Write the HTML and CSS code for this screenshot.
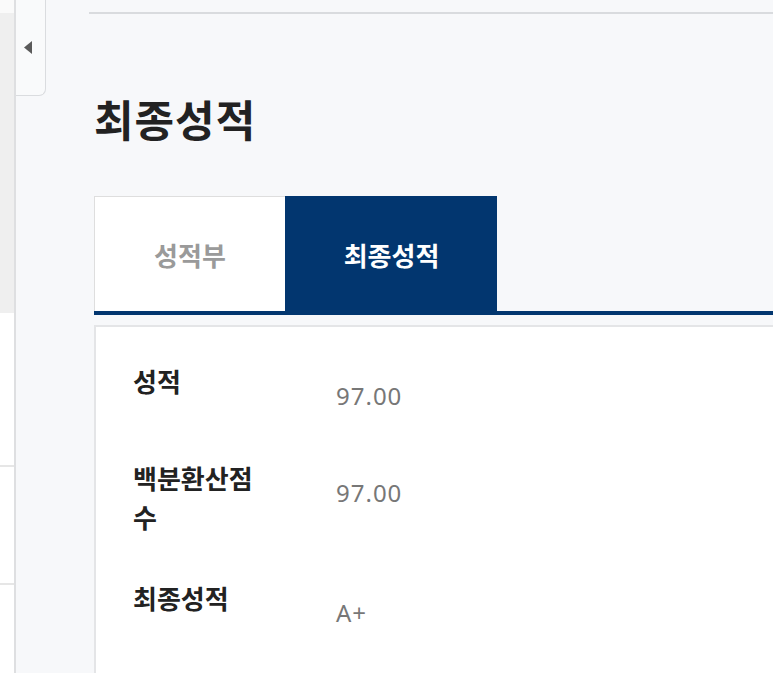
FILE: index.html
```html
<!DOCTYPE html>
<html lang="ko">
<head>
    <meta charset="UTF-8">
    <meta name="viewport" content="width=device-width, initial-scale=1.0">
    <title>최종성적</title>
    <link rel="stylesheet" href="styles.css">
</head>
<body>
    <aside class="sidebar">
        <div class="sb-top"></div>
        <div class="sb-menu"></div>
        <div class="sb-item"></div>
        <div class="sb-item short"></div>
        <div class="sb-item"></div>
    </aside>

    <main class="main">
        <button class="drawer-toggle" aria-label="메뉴 닫기">
            <svg width="8" height="13" viewBox="0 0 8 13"><path d="M8 0 L0 6.5 L8 13 Z" fill="#5a5a5a"/></svg>
        </button>

        <div class="content">
            <div class="top-rule"></div>

            <section class="page">
                <h1 class="page-title">최종성적</h1>

                <div class="tabs">
                    <a class="tab">성적부</a>
                    <a class="tab active">최종성적</a>
                </div>

                <div class="grade-box">
                    <div class="grade-row">
                        <div class="grade-label">성적</div>
                        <div class="grade-value">97.00</div>
                    </div>
                    <div class="grade-row">
                        <div class="grade-label">백분환산점수</div>
                        <div class="grade-value">97.00</div>
                    </div>
                    <div class="grade-row">
                        <div class="grade-label">최종성적</div>
                        <div class="grade-value">A+</div>
                    </div>
                </div>
            </section>
        </div>
    </main>
</body>
</html>
```

FILE: styles.css
```css
* {
    margin: 0;
    padding: 0;
    box-sizing: border-box;
}

html, body {
    height: 100%;
}

body {
    font-family: 'Noto Sans CJK KR', 'Noto Sans', sans-serif;
    display: flex;
    overflow: hidden;
    color: #222;
    background: #f7f8fa;
}

/* left menu, mostly hidden */
.sidebar {
    width: 16px;
    flex-shrink: 0;
    background: #fff;
    border-right: 2px solid #dedfe1;
}

.sb-top {
    height: 13px;
    background: #fafafa;
}

.sb-menu {
    height: 300px;
    background: #efefef;
}

.sb-item {
    height: 154px;
    border-bottom: 2px solid #e6e6e6;
}

.sb-item.short {
    height: 118px;
}

.main {
    flex: 1;
    display: flex;
    align-items: flex-start;
    min-width: 0;
}

.drawer-toggle {
    width: 30px;
    height: 96px;
    flex-shrink: 0;
    background: #f9fafb;
    border: none;
    border-right: 1px solid #dadcdf;
    border-bottom: 1px solid #dadcdf;
    border-bottom-right-radius: 7px;
    display: flex;
    align-items: center;
    justify-content: center;
    padding-right: 6px;
    cursor: pointer;
}

.content {
    flex: 1;
    min-width: 0;
    padding-top: 12px;
    margin-left: 43px;
}

.top-rule {
    height: 2px;
    background: #d9dbde;
}

.page {
    padding-left: 5px;
}

.page-title {
    font-size: 43px;
    font-weight: 700;
    line-height: 58px;
    letter-spacing: 1px;
    margin-top: 75px;
    color: #222;
}

.tabs {
    display: flex;
    margin-top: 49px;
    border-bottom: 4px solid #02366f;
}

.tab {
    height: 115px;
    display: flex;
    align-items: center;
    justify-content: center;
    font-size: 26px;
    font-weight: 700;
    color: #9a9a9a;
    background: #fff;
    border-top: 1px solid #dedede;
    border-left: 1px solid #dedede;
    width: 191px;
    cursor: pointer;
}

.tab.active {
    width: 212px;
    background: #02366f;
    border-color: #02366f;
    color: #fff;
}

.grade-box {
    margin-top: 10px;
    background: #fff;
    border-top: 2px solid #e4e5e7;
    border-left: 2px solid #e4e5e7;
    padding: 34px 0 40px 37px;
    min-height: 400px;
}

.grade-row {
    display: flex;
    align-items: flex-start;
    margin-bottom: 42px;
}

.grade-label {
    width: 133px;
    margin-right: 70px;
    font-size: 26px;
    font-weight: 700;
    line-height: 39px;
    color: #222;
}

.grade-value {
    font-family: 'Noto Sans', 'Noto Sans CJK KR', sans-serif;
    font-size: 24px;
    line-height: 37px;
    padding-top: 16px;
    padding-bottom: 2px;
    color: #777;
    letter-spacing: 1px;
}
```
